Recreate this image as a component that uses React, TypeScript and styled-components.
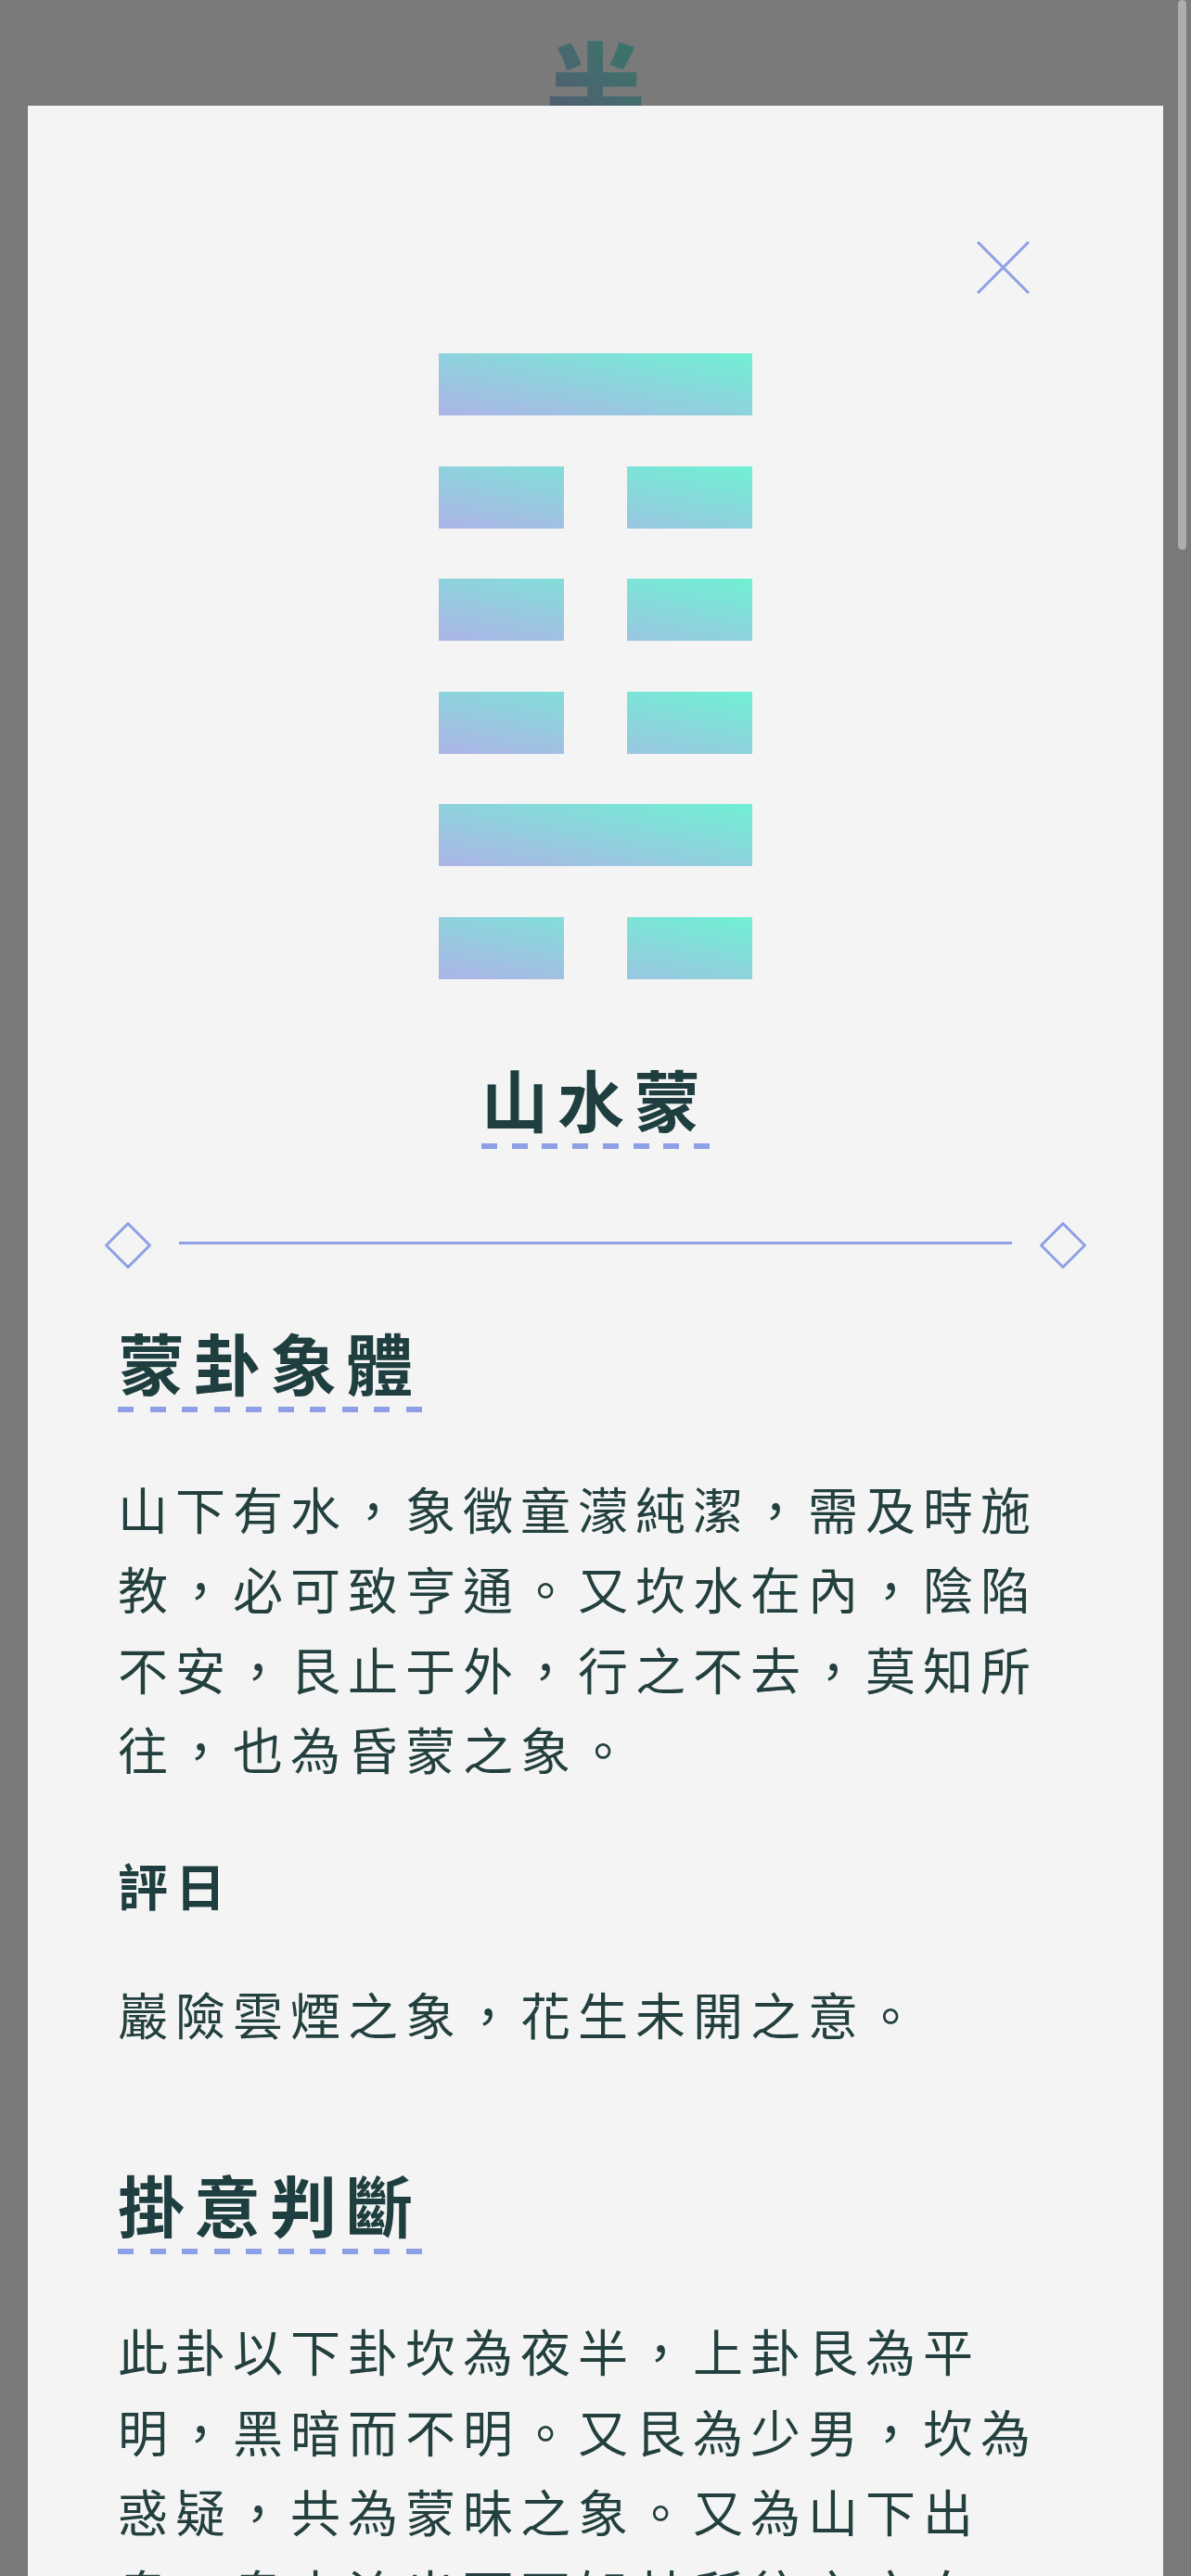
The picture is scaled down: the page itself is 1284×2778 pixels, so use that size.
import React from 'react';
import styled, { createGlobalStyle } from 'styled-components';

const GlobalStyle = createGlobalStyle`
  html, body {
    margin: 0;
    padding: 0;
    background: #f4f4f4;
    overflow: hidden;
  }
  body {
    font-family: "Noto Sans CJK TC", "Noto Sans CJK SC", sans-serif;
    color: #1f3e3f;
  }
`;

const GRADIENT = 'linear-gradient(to top right, #adb4e7, #70f0d3)';
const ACCENT = '#8e9fe6';

// each heading char takes 72px glyph + 10px letter-spacing
const CHAR_PITCH = 82;
const DASH = 17;

const Page = styled.div`
  height: 2778px;
  background: #f4f4f4;
`;

const PageHeader = styled.header`
  display: flex;
  justify-content: center;
  padding-top: 36px;
`;

const BigSign = styled.span`
  font-size: 108px;
  line-height: 1;
  font-weight: 900;
  background: ${GRADIENT};
  -webkit-background-clip: text;
  background-clip: text;
  color: transparent;
`;

const Overlay = styled.div`
  position: fixed;
  inset: 0;
  background: rgba(0, 0, 0, 0.5);
`;

const Modal = styled.div`
  position: fixed;
  top: 114px;
  left: 30px;
  right: 30px;
  bottom: 0;
  overflow: hidden;
  background: #f4f4f4;
  padding: 146px 97px 0;
`;

const ScrollThumb = styled.div`
  position: fixed;
  top: 0;
  right: 5px;
  width: 9px;
  height: 593px;
  border-radius: 5px;
  background: #adadad;
`;

const CloseRow = styled.div`
  display: flex;
  justify-content: flex-end;
  padding-right: 47px;
`;

const CloseButton = styled.button`
  width: 57px;
  height: 57px;
  padding: 0;
  border: 0;
  background: none;
  cursor: pointer;
  display: block;
  svg {
    display: block;
  }
`;

const Hexagram = styled.div`
  margin-top: 64px;
  display: flex;
  flex-direction: column;
  align-items: center;
  gap: 54.6px;
`;

const Line = styled.div`
  width: 338px;
  height: 67px;
  display: flex;
  justify-content: space-between;
`;

const Segment = styled.div<{ $half?: boolean; $side?: 'left' | 'right' }>`
  width: ${({ $half }) => ($half ? '135px' : '100%')};
  height: 100%;
  background-image: ${GRADIENT};
  background-size: 338px 100%;
  background-position: ${({ $side }) => ($side === 'right' ? 'right' : 'left')} top;
`;

const TitleWrap = styled.div`
  margin-top: 92px;
  display: flex;
  justify-content: center;
`;

const Underlined = styled.h2<{ $period: number }>`
  display: inline-block;
  margin: 0;
  font-size: 72px;
  line-height: 72px;
  font-weight: 700;
  letter-spacing: 10px;
  padding-bottom: 19px;
  color: #1f3e3f;
  background: repeating-linear-gradient(
      to right,
      ${ACCENT} 0 ${DASH}px,
      transparent ${DASH}px ${({ $period }) => $period}px
    )
    left bottom / 100% 6px no-repeat;
`;

const Divider = styled.div`
  margin: 79px -14px 0;
  display: flex;
  align-items: center;
  gap: 30px;
`;

const Rule = styled.div`
  flex: 1;
  height: 3px;
  background: ${ACCENT};
  margin-top: -4px;
`;

const Section = styled.section<{ $gap: number }>`
  margin-top: ${({ $gap }) => $gap}px;
`;

const Para = styled.p<{ $top?: number }>`
  margin: ${({ $top }) => $top ?? 61}px 0 0;
  font-size: 54px;
  line-height: 86.4px;
  letter-spacing: 8px;
  font-weight: 400;
  color: #23403f;
`;

const SubHead = styled.h3<{ $top?: number }>`
  margin: ${({ $top }) => $top ?? 60}px 0 0;
  font-size: 54px;
  line-height: 86.4px;
  letter-spacing: 8px;
  font-weight: 700;
  color: #1f3e3f;
`;

const Diamond = () => (
  <svg width="50" height="50" viewBox="0 0 50 50">
    <path d="M25 1.5 L48.5 25 L25 48.5 L1.5 25 Z" fill="none" stroke={ACCENT} strokeWidth="3" />
  </svg>
);

// dashes spread so the first and last touch the ends, like a dashed border
const dashPeriod = (text: string, dashes: number) =>
  (text.length * CHAR_PITCH - DASH) / (dashes - 1);

const Heading = ({ text, dashes, as }: { text: string; dashes: number; as?: 'h1' }) => (
  <Underlined as={as} $period={dashPeriod(text, dashes)}>
    {text}
  </Underlined>
);

const lines = [true, false, false, false, true, false];

export default function App() {
  return (
    <>
      <GlobalStyle />
      <Page>
        <PageHeader>
          <BigSign>半</BigSign>
        </PageHeader>
      </Page>
      <Overlay />
      <Modal>
        <CloseRow>
          <CloseButton aria-label="close">
            <svg width="57" height="57" viewBox="0 0 57 57">
              <path d="M1 1 L56 56 M56 1 L1 56" stroke={ACCENT} strokeWidth="3" />
            </svg>
          </CloseButton>
        </CloseRow>
        <Hexagram>
          {lines.map((yang, i) => (
            <Line key={i}>
              {yang ? (
                <Segment />
              ) : (
                <>
                  <Segment $half $side="left" />
                  <Segment $half $side="right" />
                </>
              )}
            </Line>
          ))}
        </Hexagram>
        <TitleWrap>
          <Heading as="h1" text="山水蒙" dashes={8} />
        </TitleWrap>
        <Divider>
          <Diamond />
          <Rule />
          <Diamond />
        </Divider>
        <Section $gap={64}>
          <Heading text="蒙卦象體" dashes={10} />
          <Para>山下有水，象徵童濛純潔，需及時施教，必可致亨通。又坎水在內，陰陷不安，艮止于外，行之不去，莫知所往，也為昏蒙之象。</Para>
          <SubHead>評日</SubHead>
          <Para $top={53}>巖險雲煙之象，花生未開之意。</Para>
        </Section>
        <Section $gap={125}>
          <Heading text="掛意判斷" dashes={10} />
          <Para>此卦以下卦坎為夜半，上卦艮為平明，黑暗而不明。又艮為少男，坎為惑疑，共為蒙昧之象。又為山下出泉，泉水流出而不知其所往之方向，故稱為蒙。</Para>
        </Section>
      </Modal>
      <ScrollThumb />
    </>
  );
}
